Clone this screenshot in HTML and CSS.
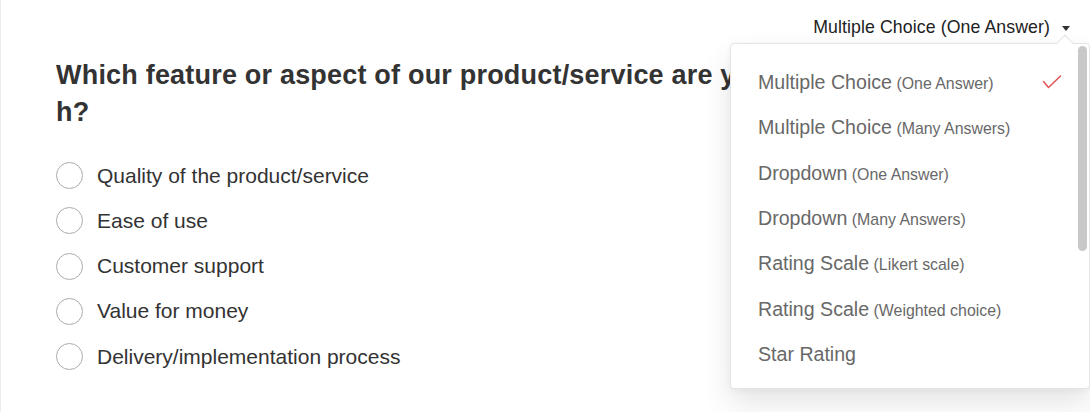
FILE: index.html
```html
<!DOCTYPE html>
<html lang="en">
<head>
<meta charset="utf-8">
<title>Question type</title>
<link rel="stylesheet" href="styles.css">
</head>
<body>
<div class="page">
  <header class="toolbar">
    <div class="type-select">
      <span class="type-label">Multiple Choice (One Answer)</span>
      <span class="caret"></span>
    </div>
  </header>

  <main class="question">
    <h1 class="question-title">Which feature or aspect of our product/service are you most satisfied with?</h1>
    <ul class="options">
      <li class="option"><span class="radio"></span><span class="option-text">Quality of the product/service</span></li>
      <li class="option"><span class="radio"></span><span class="option-text">Ease of use</span></li>
      <li class="option"><span class="radio"></span><span class="option-text">Customer support</span></li>
      <li class="option"><span class="radio"></span><span class="option-text">Value for money</span></li>
      <li class="option"><span class="radio"></span><span class="option-text">Delivery/implementation process</span></li>
    </ul>
  </main>

  <div class="menu">
    <span class="menu-notch"></span>
    <ul class="menu-list">
      <li class="menu-item selected">
        <span><span class="item-main">Multiple Choice</span> <span class="item-sub">(One Answer)</span></span>
        <svg class="check" width="20" height="14" viewBox="0 0 20 14"><path d="M1.5 6.5 L6.5 12.5 L18.5 1" fill="none" stroke="#e2575a" stroke-width="1.6" stroke-linecap="round" stroke-linejoin="round"/></svg>
      </li>
      <li class="menu-item"><span><span class="item-main">Multiple Choice</span> <span class="item-sub">(Many Answers)</span></span></li>
      <li class="menu-item"><span><span class="item-main">Dropdown</span> <span class="item-sub">(One Answer)</span></span></li>
      <li class="menu-item"><span><span class="item-main">Dropdown</span> <span class="item-sub">(Many Answers)</span></span></li>
      <li class="menu-item"><span><span class="item-main">Rating Scale</span> <span class="item-sub">(Likert scale)</span></span></li>
      <li class="menu-item"><span><span class="item-main">Rating Scale</span> <span class="item-sub">(Weighted choice)</span></span></li>
      <li class="menu-item"><span><span class="item-main">Star Rating</span></span></li>
    </ul>
    <span class="scrollbar"></span>
  </div>
</div>
</body>
</html>
```

FILE: styles.css
```css
* { box-sizing: border-box; }

html, body {
  margin: 0;
  padding: 0;
  background: #ffffff;
}

body {
  font-family: "Liberation Sans", Arial, Helvetica, sans-serif;
  color: #333333;
}

.page {
  position: relative;
  width: 1090px;
  height: 412px;
  overflow: hidden;
  border-left: 1px solid #ececec;
}

.toolbar {
  display: flex;
  justify-content: flex-end;
  padding: 15px 20px 0 0;
  height: 39px;
}

.type-select {
  display: flex;
  align-items: center;
  gap: 12px;
  height: 24px;
}

.type-label {
  font-size: 17.7px;
  color: #222222;
  line-height: 24px;
  letter-spacing: 0.1px;
}

.caret {
  width: 0;
  height: 0;
  border-left: 4.5px solid transparent;
  border-right: 4.5px solid transparent;
  border-top: 5px solid #333333;
  margin-top: 2px;
}

.question {
  padding: 18px 0 0 55px;
}

.question-title {
  margin: 0;
  width: 959px;
  font-size: 27px;
  font-weight: 700;
  line-height: 37px;
  letter-spacing: 0.2px;
  color: #333333;
  word-break: break-all;
}

.options {
  list-style: none;
  margin: 22px 0 0 0;
  padding: 0;
}

.option {
  display: flex;
  align-items: center;
  gap: 14px;
  height: 45.25px;
}

.radio {
  width: 27px;
  height: 27px;
  border-radius: 50%;
  border: 1.5px solid #ababab;
  background: #ffffff;
  flex: none;
}

.option-text {
  font-size: 21px;
  color: #333333;
  line-height: 26px;
}

.menu {
  position: absolute;
  top: 43px;
  left: 729px;
  width: 360px;
  height: 346px;
  background: #ffffff;
  border: 1px solid #e4e4e4;
  border-radius: 4px;
  box-shadow: 0 14px 30px rgba(0, 0, 0, 0.11), 0 2px 6px rgba(0, 0, 0, 0.04);
}

.menu-notch {
  position: absolute;
  top: -7px;
  left: 328px;
  width: 12px;
  height: 12px;
  background: #ffffff;
  border-top: 1px solid #e4e4e4;
  border-left: 1px solid #e4e4e4;
  transform: rotate(45deg);
}

.menu-list {
  list-style: none;
  margin: 0;
  padding: 16px 0 0 0;
}

.menu-item {
  display: flex;
  align-items: center;
  justify-content: space-between;
  height: 45.3px;
  padding: 0 27px 0 27px;
  color: #686868;
}

.item-main {
  font-size: 19.6px;
}

.item-sub {
  font-size: 15.9px;
}

.check {
  display: block;
  margin-top: -2px;
}

.scrollbar {
  position: absolute;
  top: 2px;
  left: 347px;
  width: 9px;
  height: 205px;
  border-radius: 5px;
  background: #c8c8c8;
}
```
